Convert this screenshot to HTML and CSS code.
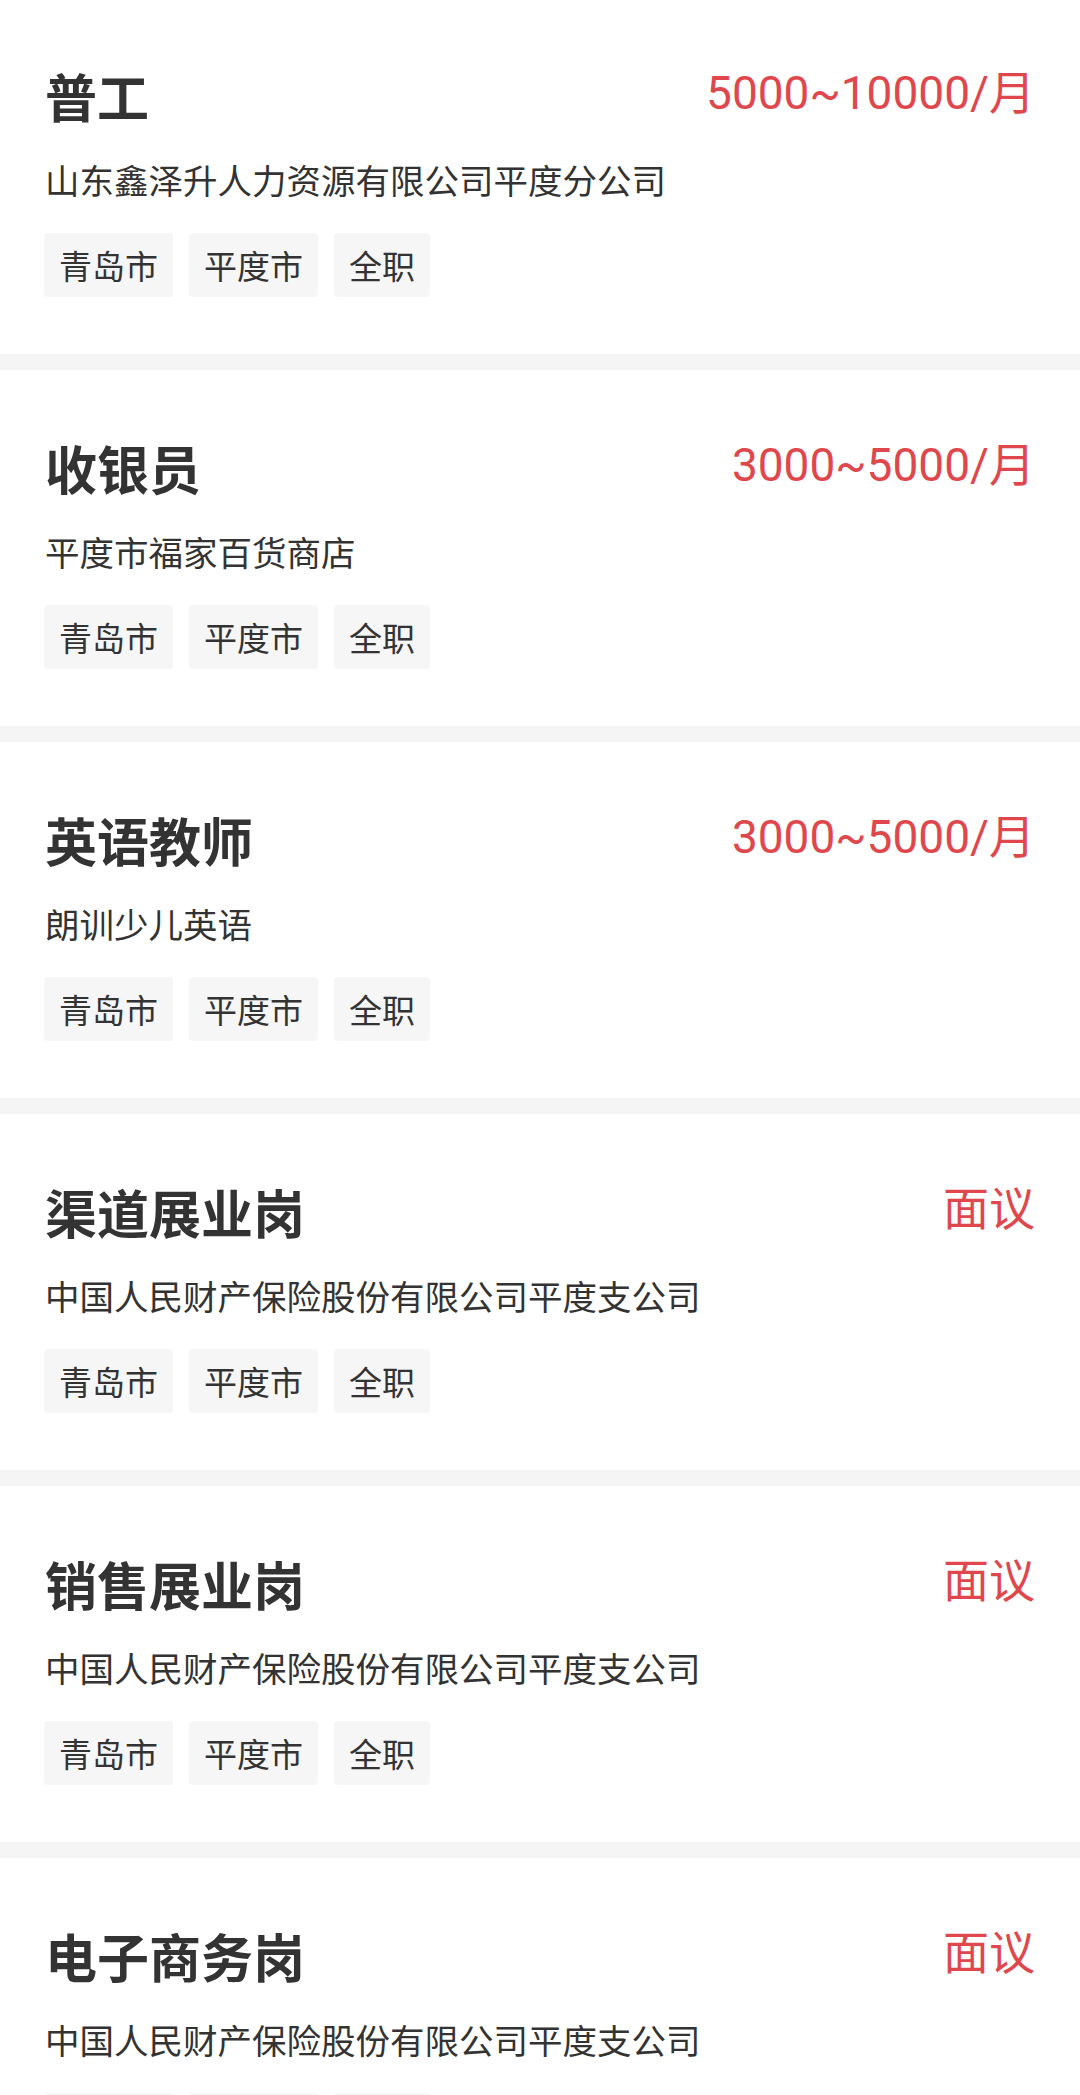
FILE: index.html
```html
<!DOCTYPE html>
<html lang="zh-CN">
<head>
<meta charset="utf-8">
<title>职位列表</title>
<link rel="stylesheet" href="styles.css">
</head>
<body>
<div class="list">
  <div class="card">
    <div class="head"><span class="title">普工</span><span class="salary">5000~10000/月</span></div>
    <div class="company">山东鑫泽升人力资源有限公司平度分公司</div>
    <div class="tags"><span class="tag">青岛市</span><span class="tag">平度市</span><span class="tag">全职</span></div>
  </div>
  <div class="card">
    <div class="head"><span class="title">收银员</span><span class="salary">3000~5000/月</span></div>
    <div class="company">平度市福家百货商店</div>
    <div class="tags"><span class="tag">青岛市</span><span class="tag">平度市</span><span class="tag">全职</span></div>
  </div>
  <div class="card">
    <div class="head"><span class="title">英语教师</span><span class="salary">3000~5000/月</span></div>
    <div class="company">朗训少儿英语</div>
    <div class="tags"><span class="tag">青岛市</span><span class="tag">平度市</span><span class="tag">全职</span></div>
  </div>
  <div class="card">
    <div class="head"><span class="title">渠道展业岗</span><span class="salary">面议</span></div>
    <div class="company">中国人民财产保险股份有限公司平度支公司</div>
    <div class="tags"><span class="tag">青岛市</span><span class="tag">平度市</span><span class="tag">全职</span></div>
  </div>
  <div class="card">
    <div class="head"><span class="title">销售展业岗</span><span class="salary">面议</span></div>
    <div class="company">中国人民财产保险股份有限公司平度支公司</div>
    <div class="tags"><span class="tag">青岛市</span><span class="tag">平度市</span><span class="tag">全职</span></div>
  </div>
  <div class="card">
    <div class="head"><span class="title">电子商务岗</span><span class="salary">面议</span></div>
    <div class="company">中国人民财产保险股份有限公司平度支公司</div>
    <div class="tags"><span class="tag">青岛市</span><span class="tag">平度市</span><span class="tag">全职</span></div>
  </div>
</div>
</body>
</html>
```

FILE: styles.css
```css
html, body {
  margin: 0;
  padding: 0;
  background: #f5f5f5;
}
body {
  font-family: "Noto Sans CJK SC", "Noto Sans", sans-serif;
  color: #333333;
}
.list {
  margin-top: -2px;
  display: flex;
  flex-direction: column;
  gap: 16px;
}
.card {
  background: #ffffff;
  height: 356px;
  box-sizing: border-box;
  padding: 68px 45px 0 44px;
}
.head {
  display: flex;
  justify-content: space-between;
  align-items: center;
  height: 60px;
}
.title {
  font-size: 52px;
  font-weight: 700;
  line-height: 60px;
  color: #333333;
  padding-left: 1px;
}
.salary {
  font-family: Roboto, "Noto Sans CJK SC", sans-serif;
  font-size: 46px;
  line-height: 60px;
  color: #e0474d;
  margin-top: -6px;
}
.company {
  margin-top: 33px;
  font-size: 34.5px;
  line-height: 40px;
  color: #333333;
  padding-left: 1px;
}
.tags {
  margin-top: 34px;
  display: flex;
  gap: 16px;
}
.tag {
  background: #f6f6f6;
  border-radius: 4px;
  height: 64px;
  line-height: 64px;
  padding: 0 15px;
  font-size: 33px;
  color: #333333;
}
```
